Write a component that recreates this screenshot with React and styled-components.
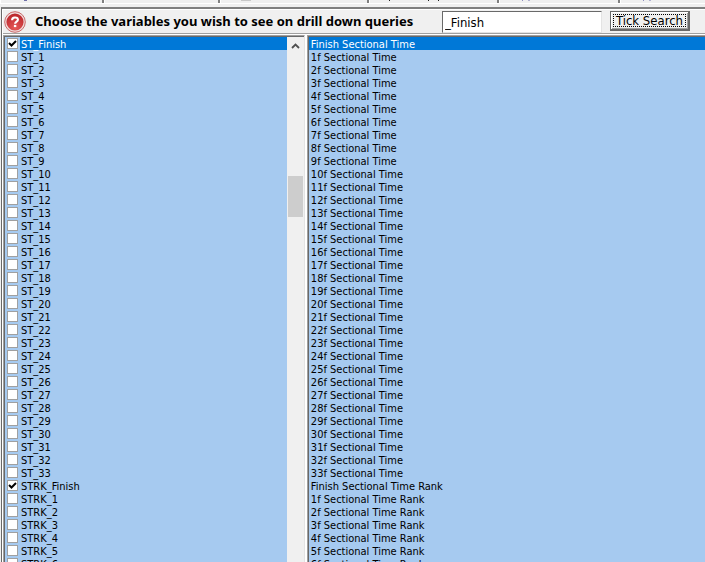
import React, { useState } from "react";
import styled, { createGlobalStyle } from "styled-components";

const range = (n) => Array.from({ length: n }, (_, i) => i + 1);

const variables = [
  { name: "ST_Finish", label: "Finish Sectional Time" },
  ...range(33).map((n) => ({ name: `ST_${n}`, label: `${n}f Sectional Time` })),
  { name: "STRK_Finish", label: "Finish Sectional Time Rank" },
  ...range(6).map((n) => ({
    name: `STRK_${n}`,
    label: `${n}f Sectional Time Rank`,
  })),
];

// lower edge of the tab row: tab width and the captions' descenders [x, width, colour]
const tabs = [
  { width: 104, marks: [[23, 3, "#6f6fa8"]] },
  { width: 116, marks: [] },
  { width: 149, marks: [[20, 10, "#c8c8c8"]] },
  { width: 130, marks: [[19, 1, "#222"], [58, 1, "#222"], [68, 1, "#222"]] },
  { width: 121, marks: [[22, 1, "#8f8fc0"], [28, 2, "#b0b0d0"]] },
  { width: 89, marks: [[22, 1, "#8f8fc0"], [28, 2, "#b0b0d0"]] },
];

function HelpIcon() {
  return (
    <svg width="22" height="22" viewBox="0 0 22 22" aria-hidden="true">
      <defs>
        <radialGradient id="ball" cx="50%" cy="85%" r="85%">
          <stop offset="0" stopColor="#e65a58" />
          <stop offset="1" stopColor="#b9242a" />
        </radialGradient>
      </defs>
      <circle cx="11" cy="11" r="10.3" fill="#f0dcdc" stroke="#c96a6a" strokeWidth="1" />
      <circle cx="11" cy="11" r="8.6" fill="url(#ball)" />
      <path
        d="M8.1 9.2C8 5.8 13.9 5.6 13.9 8.7C13.9 10.6 11.1 10.7 11.1 12.8"
        fill="none"
        stroke="#fff"
        strokeWidth="2.1"
      />
      <rect x="9.9" y="13.9" width="2.4" height="2.2" fill="#fff" />
    </svg>
  );
}

function App() {
  const [ticked, setTicked] = useState(["ST_Finish", "STRK_Finish"]);
  const [selected, setSelected] = useState("ST_Finish");
  const [search, setSearch] = useState("_Finish");

  const toggle = (name) =>
    setTicked(
      ticked.includes(name)
        ? ticked.filter((item) => item !== name)
        : [...ticked, name]
    );

  const tickSearch = () =>
    setTicked(
      variables.map((v) => v.name).filter((name) => name.includes(search))
    );

  return (
    <Window>
      <GlobalStyle />
      <TabStrip>
        {tabs.map(({ width, marks }, i) => (
          <TabEdge key={i} $width={width}>
            <svg width={width - 4} height="3" aria-hidden="true">
              {marks.map(([x, w, color]) => (
                <rect key={x} x={x} y="0" width={w} height="1" fill={color} />
              ))}
            </svg>
          </TabEdge>
        ))}
      </TabStrip>
      <Frame>
        <Header>
          <HelpButton aria-label="Help">
            <HelpIcon />
          </HelpButton>
          <Title>Choose the variables you wish to see on drill down queries</Title>
          <SearchBox
            aria-label="Search variables"
            value={search}
            onChange={(e) => setSearch(e.target.value)}
          />
          <TickButton onClick={tickSearch}>
            <span>Tick Search</span>
          </TickButton>
        </Header>
        <Lists>
          <NameList>
            <Rows>
              {variables.map(({ name }) => (
                <NameRow key={name}>
                  <Tick
                    type="checkbox"
                    checked={ticked.includes(name)}
                    onChange={() => toggle(name)}
                  />
                  <RowText $selected={name === selected}>{name}</RowText>
                </NameRow>
              ))}
            </Rows>
            <ScrollBar>
              <svg width="9" height="6" viewBox="0 0 9 6" aria-hidden="true">
                <path d="M1 5L4.5 1.5L8 5" fill="none" stroke="#505050" strokeWidth="1.8" />
              </svg>
              <Thumb />
            </ScrollBar>
          </NameList>
          <LabelList>
            <Rows>
              {variables.map(({ name, label }) => (
                <LabelRow
                  key={name}
                  $selected={name === selected}
                  onClick={() => setSelected(name)}
                >
                  {label}
                </LabelRow>
              ))}
            </Rows>
          </LabelList>
        </Lists>
      </Frame>
    </Window>
  );
}
export default App;

const GlobalStyle = createGlobalStyle`
  * {
    box-sizing: border-box;
  }

  body {
    margin: 0;
    background: #f0f0f0;
    color: #000;
    font-family: "DejaVu Sans Condensed", "DejaVu Sans", sans-serif;
    font-size: 11px;
  }
`;

const Window = styled.div`
  height: 100vh;
  display: flex;
  flex-direction: column;
  overflow: hidden;
`;

const TabStrip = styled.div`
  display: flex;
  flex: none;
  height: 4px;
  overflow: hidden;
  border-bottom: 1px solid #fff;
`;

const TabEdge = styled.div`
  flex: none;
  display: flex;
  width: ${(props) => props.$width}px;
  border-left: 1px solid #fff;
  border-right: 2px solid #808080;
`;

const Frame = styled.main`
  flex: 1;
  min-height: 0;
  display: flex;
  flex-direction: column;
  margin-top: 3px;
  margin-left: 1px;
  padding-left: 1px;
  border-top: 2px solid #808080;
  border-left: 1px solid #696969;
  background: #fff;
`;

const Header = styled.header`
  display: flex;
  align-items: center;
  flex: none;
  height: 25px;
  border-top: 1px solid #fff;
  border-bottom: 1px solid #a0a0a0;
  background: #f0f0f0;
`;

const HelpButton = styled.button`
  display: flex;
  align-self: flex-end;
  width: 22px;
  height: 22px;
  margin-left: 1px;
  padding: 0;
  border: 0;
  background: none;
`;

const Title = styled.h1`
  width: 416px;
  margin: 0 0 2px;
  padding-left: 9px;
  font-family: "Noto Sans", sans-serif;
  font-size: 13px;
  line-height: 20px;
  font-weight: bold;
  white-space: nowrap;
`;

const SearchBox = styled.input`
  align-self: flex-end;
  width: 160px;
  height: 22px;
  padding: 1px 2px 0;
  border: 1px solid #e3e3e3;
  border-top: 1px solid #696969;
  border-left: 1px solid #696969;
  background: #fff;
  font: inherit;
  font-size: 13px;
  outline: none;
`;

const TickButton = styled.button`
  width: 80px;
  height: 20px;
  margin: 0 0 1px 8px;
  padding: 2px;
  border: 1px solid #696969;
  border-right-width: 2px;
  border-bottom-width: 2px;
  background: #f0f0f0;
  box-shadow: inset 1px 1px #fff, inset -1px -1px #a0a0a0;
  font: inherit;
  font-size: 13px;
  line-height: 11px;

  span {
    display: block;
    border: 1px dotted #000;
    white-space: nowrap;
  }
`;

const Lists = styled.div`
  flex: 1;
  min-height: 0;
  display: flex;
  margin-top: 1px;
`;

const List = styled.div`
  display: flex;
  padding: 1px 0 0 1px;
  border-top: 1px solid #a0a0a0;
  border-left: 1px solid #a0a0a0;
  background: #696969;
`;

const NameList = styled(List)`
  flex: none;
  width: 43%;
  border-right: 1px solid #e3e3e3;
`;

const LabelList = styled(List)`
  flex: 1;
  min-width: 0;
  margin-left: 2px;
`;

const Rows = styled.div`
  flex: 1;
  overflow: hidden;
  background: #a6caf0;
`;

const NameRow = styled.label`
  display: flex;
  align-items: center;
  height: 13px;
  padding-left: 2px;
`;

const Tick = styled.input`
  appearance: none;
  flex: none;
  width: 11px;
  height: 11px;
  margin: 0 2px 0 0;
  border: 1px solid #a0a0a0;
  background: #fff;

  &:checked {
    background: #fff
      url("data:image/svg+xml,%3Csvg xmlns='http://www.w3.org/2000/svg' viewBox='0 0 9 9'%3E%3Cpath d='M1 4L3.5 6.5L8 2' fill='none' stroke='black' stroke-width='2'/%3E%3C/svg%3E");
  }
`;

const RowText = styled.span`
  flex: 1;
  height: 13px;
  padding-left: 1px;
  line-height: 15px;
  white-space: nowrap;
  color: ${(props) => (props.$selected ? "#fff" : "#000")};
  background: ${(props) => (props.$selected ? "#0078d7" : "none")};
`;

const ScrollBar = styled.div`
  width: 17px;
  display: flex;
  flex-direction: column;
  align-items: center;
  padding-top: 6px;
  background: #f0f0f0;
`;

const Thumb = styled.div`
  width: 15px;
  height: 41px;
  margin-top: 127px;
  background: #cdcdcd;
`;

const LabelRow = styled.div`
  height: 13px;
  padding-left: 2px;
  line-height: 15px;
  white-space: nowrap;
  color: ${(props) => (props.$selected ? "#fff" : "#000")};
  background: ${(props) => (props.$selected ? "#0078d7" : "none")};
`;
